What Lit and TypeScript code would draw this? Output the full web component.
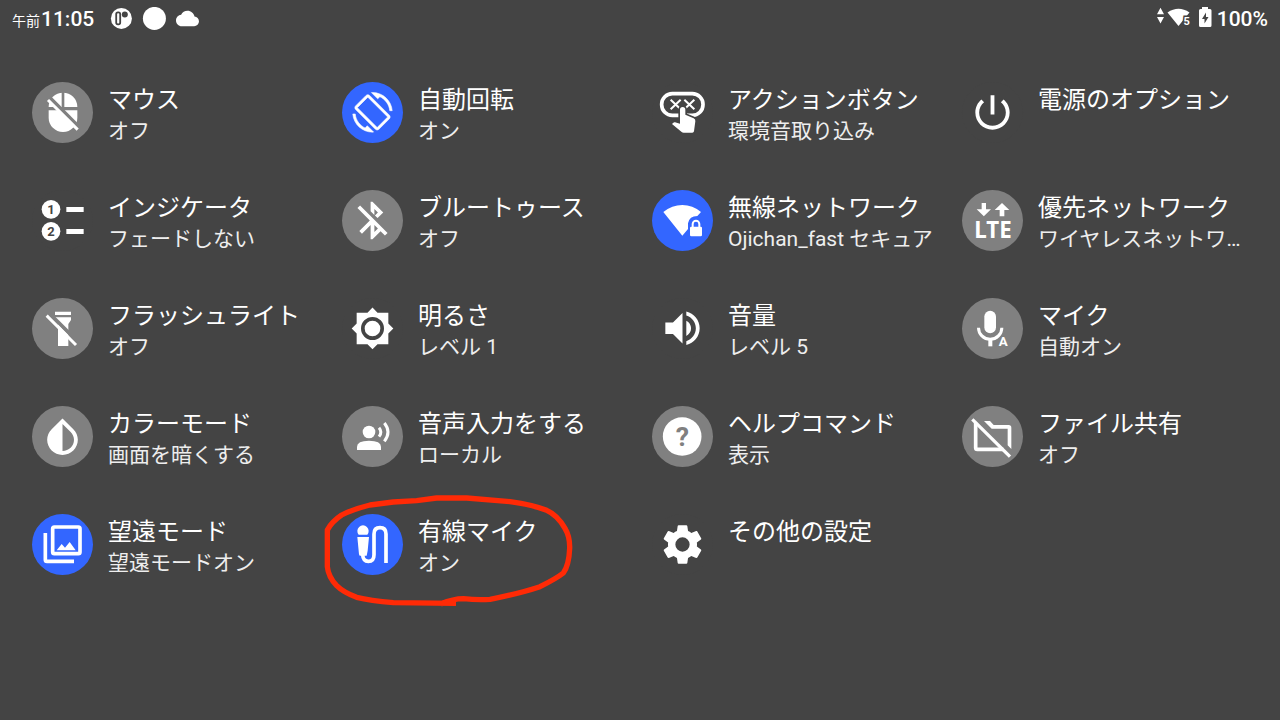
import { LitElement, html, svg, css, nothing } from "lit";
import type { SVGTemplateResult } from "lit";
import { customElement, property } from "lit/decorators.js";
import { classMap } from "lit/directives/class-map.js";

type Tone = "plain" | "off" | "on";

interface Setting {
  icon: string;
  tone: Tone;
  title: string;
  state?: string;
  marked?: boolean;
}

const SETTINGS: Setting[] = [
  { icon: "mouseOff", tone: "off", title: "マウス", state: "オフ" },
  { icon: "rotate", tone: "on", title: "自動回転", state: "オン" },
  { icon: "action", tone: "plain", title: "アクションボタン", state: "環境音取り込み" },
  { icon: "power", tone: "plain", title: "電源のオプション" },
  { icon: "indicator", tone: "plain", title: "インジケータ", state: "フェードしない" },
  { icon: "bluetoothOff", tone: "off", title: "ブルートゥース", state: "オフ" },
  { icon: "wifiLock", tone: "on", title: "無線ネットワーク", state: "Ojichan_fast セキュア" },
  { icon: "lte", tone: "off", title: "優先ネットワーク", state: "ワイヤレスネットワーク" },
  { icon: "flashOff", tone: "off", title: "フラッシュライト", state: "オフ" },
  { icon: "brightness", tone: "plain", title: "明るさ", state: "レベル 1" },
  { icon: "volume", tone: "plain", title: "音量", state: "レベル 5" },
  { icon: "mic", tone: "off", title: "マイク", state: "自動オン" },
  { icon: "colorMode", tone: "off", title: "カラーモード", state: "画面を暗くする" },
  { icon: "voice", tone: "off", title: "音声入力をする", state: "ローカル" },
  { icon: "help", tone: "off", title: "ヘルプコマンド", state: "表示" },
  { icon: "folderOff", tone: "off", title: "ファイル共有", state: "オフ" },
  { icon: "gallery", tone: "on", title: "望遠モード", state: "望遠モードオン" },
  { icon: "wiredMic", tone: "on", title: "有線マイク", state: "オン", marked: true },
  { icon: "settings", tone: "plain", title: "その他の設定" },
];

/* All glyphs share a 183-unit square, three units per pixel. */
const ICONS: Record<string, SVGTemplateResult> = {
  mouseOff: svg`
    <rect x="50" y="32" width="86" height="118" rx="43" ry="43"/>
    <path class="cut" d="M89 30h8v50h-8z M48 75h90v10h-90z"/>
    <path class="cut-line" stroke-width="11" d="M50 44L144 138"/>
    <path class="line" stroke-width="9" d="M48 54L137 143"/>`,
  rotate: svg`<g transform="translate(91.5 91) scale(4.95) translate(-12 -12)">
    <path class="bold" d="M16.48 2.52c3.27 1.55 5.61 4.72 5.97 8.48h1.5C23.44 4.84 18.29 0 12 0l-.66.03 3.81 3.81 1.33-1.32zm-6.25-.77c-.59-.59-1.54-.59-2.12 0L1.75 8.11c-.59.59-.59 1.54 0 2.12l12.02 12.02c.59.59 1.54.59 2.12 0l6.36-6.36c.59-.59.59-1.54 0-2.12L10.23 1.75zm4.6 19.44L2.81 9.17l6.36-6.36 12.02 12.02-6.36 6.36zm-7.31.29C4.25 19.94 1.91 16.76 1.55 13H.05C.56 19.16 5.71 24 12 24l.66-.03-3.81-3.81-1.33 1.32z"/></g>`,
  action: svg`
    <rect class="line" stroke-width="11" x="29" y="35" width="124" height="65" rx="32"/>
    <path class="line" stroke-width="6" d="M56 53L86 82M86 53L56 82M97 53L127 82M127 53L97 82"/>
    <path class="edge" stroke-width="10" d="M84 83a8 8 0 0 1 16 0V98l25 11q6 3 5 9l-4 30q-1 4-5 4H95q-4 0-6-2L60 126l4-4q2-2 5-1l15 4z"/>
    <path d="M84 83a8 8 0 0 1 16 0V98l25 11q6 3 5 9l-4 30q-1 4-5 4H95q-4 0-6-2L60 126l4-4q2-2 5-1l15 4z"/>`,
  power: svg`<g transform="translate(91.5 91.5) scale(5.72) translate(-12 -12)">
    <path d="M13 3h-2v10h2V3zm4.83 2.17l-1.42 1.42C17.99 7.86 19 9.81 19 12c0 3.87-3.13 7-7 7s-7-3.13-7-7c0-2.19 1.01-4.14 2.58-5.42L6.17 5.17C4.23 6.82 3 9.26 3 12c0 4.97 4.03 9 9 9s9-4.03 9-9c0-2.74-1.23-5.18-3.17-6.83z"/></g>`,
  indicator: svg`
    <circle cx="57" cy="58" r="28"/><circle cx="57" cy="124" r="28"/>
    <path d="M103 51h52v15h-52z M103 117h52v15h-52z"/>
    <text class="digit" x="57" y="72">1</text><text class="digit" x="57" y="138">2</text>`,
  bluetoothOff: svg`<g transform="translate(91.5 91.5) scale(5.65) translate(-12 -12)">
    <path d="M13 5.83l1.88 1.88-1.6 1.6 1.41 1.41 3.02-3.02L12 2h-1v5.03l2 2v-3.2zM5.41 4L4 5.41 10.59 12 5 17.59 6.41 19 11 14.41V22h1l4.29-4.29 2.3 2.29L20 18.59 5.41 4zM13 18.17v-3.76l1.88 1.88L13 18.17z"/></g>`,
  wifiLock: svg`
    <path d="M34 66Q60 45 91 45T147 66L136 78Q112 78 108 100V117L91 137z"/>
    <rect x="114" y="110" width="36" height="29" rx="4"/>
    <path class="line" stroke-width="6" d="M122 112V102a10 10 0 0 1 20 0V112"/>`,
  lte: svg`
    <path d="M59 39h13v19h15L65.5 79 44 58h15z M113 79h14V60h15L120 39 98 60h15z"/>
    <text class="lte" x="93" y="145">LTE</text>`,
  flashOff: svg`
    <path d="M69 41h48v10h-48z M69 58h48v8l-8 12v66H78V78l-9-12z"/>
    <path class="cut-line" stroke-width="11" d="M48 42L140 134"/>
    <path class="line" stroke-width="9" d="M44 53L132 141"/>`,
  brightness: svg`
    <path d="M44 44H76.5L91.5 28.5 106.5 44H139V76.5L154 91.5 139 106.5V139H106.5L91.5 154 76.5 139H44V106.5L29 91.5 44 76.5z"/>
    <circle class="cut-line" stroke-width="11" cx="91.5" cy="91.5" r="29"/>`,
  volume: svg`<g transform="translate(91.5 91) scale(5.72) translate(-12 -12)">
    <path d="M3 9v6h4l5 5V4L7 9H3zm13.5 3c0-1.77-1.02-3.29-2.5-4.03v8.05c1.48-.73 2.5-2.25 2.5-4.02zM14 3.23v2.06c2.89.86 5 3.54 5 6.71s-2.11 5.85-5 6.71v2.06c4.01-.91 7-4.49 7-8.77s-2.99-7.86-7-8.77z"/></g>`,
  mic: svg`
    <rect x="67" y="38" width="35" height="68" rx="17.5"/>
    <path class="line" stroke-width="9" d="M49.5 89a35 35 0 0 0 70 0"/>
    <path d="M79 122h12v23h-12z"/>
    <text class="letter" x="124" y="145">A</text>`,
  colorMode: svg`<g transform="translate(91.5 95) scale(5.75) translate(-12 -12)">
    <path fill-rule="evenodd" d="M12 2L6.35 7.56C4.9 8.99 4 10.96 4 13.13 4 17.48 7.58 21 12 21s8-3.52 8-7.87c0-2.17-.9-4.14-2.35-5.57L12 2zM12 4.81V19c3.31 0 6-2.63 6-5.87 0-1.56-.62-3.03-1.75-4.14z"/></g>`,
  voice: svg`
    <circle cx="81" cy="78" r="19"/>
    <path d="M45 132V122q0-18 36-18t36 18V132z"/>
    <path class="line" stroke-width="9" d="M127 51Q149 78 127 106"/>
    <path class="line" stroke-width="9" d="M111 65Q122 78 111 92"/>`,
  help: svg`<circle cx="90.5" cy="91.5" r="58"/><text class="question" x="91" y="120">?</text>`,
  folderOff: svg`
    <path d="M66 45H84L95 57H140a8 8 0 0 1 8 8V129L137 118V68H89z"/>
    <path class="line" stroke-width="11" d="M41 50V125q0 5 5 5H124"/>
    <path class="line" stroke-width="10" d="M31 40L144 152"/>`,
  gallery: svg`
    <rect class="line" stroke-width="11" x="62" y="39" width="82" height="80" rx="5"/>
    <path class="line" stroke-width="11" d="M40 57V137q0 5 5 5H126"/>
    <path d="M74 109L89 90 99 101 113 84 131 109z"/>`,
  wiredMic: svg`
    <path d="M50 62a17 17 0 1 1 26 0z M46 69H81L77 110 74 125H53L51 121z"/>
    <path class="line" stroke-width="11" d="M62 122Q63 142 79 142 96 142 96 122V60Q96 41 114 41 132 41 132 60V147"/>`,
  settings: svg`<g transform="translate(91.5 91.5) scale(5.8) translate(-12 -12)">
    <path d="M19.43 12.98c.04-.32.07-.64.07-.98s-.03-.66-.07-.98l2.11-1.65c.19-.15.24-.42.12-.64l-2-3.46c-.12-.22-.39-.3-.61-.22l-2.49 1c-.52-.4-1.08-.73-1.69-.98l-.38-2.65C14.46 2.18 14.25 2 14 2h-4c-.25 0-.46.18-.49.42l-.38 2.65c-.61.25-1.17.59-1.69.98l-2.49-1c-.23-.09-.49 0-.61.22l-2 3.46c-.13.22-.07.49.12.64l2.11 1.65c-.04.32-.07.65-.07.98s.03.66.07.98l-2.11 1.65c-.19.15-.24.42-.12.64l2 3.46c.12.22.39.3.61.22l2.49-1c.52.4 1.08.73 1.69.98l.38 2.65c.03.24.24.42.49.42h4c.25 0 .46-.18.49-.42l.38-2.65c.61-.25 1.17-.59 1.69-.98l2.49 1c.23.09.49 0 .61-.22l2-3.46c.12-.22.07-.49-.12-.64l-2.11-1.65zM12 15.7a3.7 3.7 0 1 1 0-7.4 3.7 3.7 0 0 1 0 7.4z"/></g>`,
};

@customElement("setting-tile")
export class SettingTile extends LitElement {
  @property({ attribute: false }) item!: Setting;

  static styles = css`
    :host {
      display: block;
      position: relative;
      min-width: 0;
    }
    .tile {
      display: flex;
      align-items: flex-start;
      gap: 15px;
      width: 100%;
      padding: 0 10px 0 12px;
      border: 0;
      background: none;
      color: #fff;
      font: inherit;
      text-align: left;
      cursor: pointer;
    }
    .icon {
      --surface: #444;
      flex: none;
      width: 61px;
      height: 61px;
      border-radius: 50%;
      background: var(--surface);
    }
    .icon.off {
      --surface: #808080;
    }
    .icon.on {
      --surface: #36f;
    }
    .icon svg {
      display: block;
      width: 100%;
      height: 100%;
      fill: #fff;
    }
    .line {
      fill: none;
      stroke: #fff;
    }
    .bold {
      stroke: #fff;
      stroke-width: 0.35;
    }
    .cut {
      fill: var(--surface);
    }
    .cut-line {
      fill: none;
      stroke: var(--surface);
    }
    .edge {
      fill: var(--surface);
      stroke: var(--surface);
    }
    text {
      text-anchor: middle;
      font-family: Roboto, sans-serif;
      font-weight: 700;
    }
    .digit {
      font-size: 39px;
      fill: var(--surface);
    }
    .letter {
      font-size: 40px;
    }
    .lte {
      font-family: "Noto Sans", sans-serif;
      font-size: 67px;
    }
    .question {
      font-size: 80px;
      fill: var(--surface);
    }
    .label {
      display: flex;
      flex-direction: column;
      min-width: 0;
      padding-top: 2px;
    }
    .title,
    .state {
      overflow: hidden;
      white-space: nowrap;
      text-overflow: ellipsis;
    }
    .title {
      font-size: 24px;
      line-height: 32px;
    }
    .state {
      color: #eee;
      font-size: 21px;
      line-height: 30px;
    }
    .marker {
      position: absolute;
      left: -10px;
      top: -22px;
      width: 260px;
      height: 120px;
      fill: none;
      stroke: #ff2a06;
      stroke-width: 16;
      stroke-linejoin: round;
      pointer-events: none;
    }
  `;

  render() {
    const { icon, tone, title, state, marked } = this.item;
    return html`
      <button class="tile" type="button">
        <span class=${classMap({ icon: true, [tone]: true })}>
          <svg viewBox="0 0 183 183" aria-hidden="true">${ICONS[icon]}</svg>
        </span>
        <span class="label">
          <span class="title">${title}</span>
          ${state ? html`<span class="state">${state}</span>` : nothing}
        </span>
      </button>
      ${marked
        ? html`<svg class="marker" viewBox="0 621 780 360" aria-hidden="true">
            <path
              d="M408 955L220 953Q150 947 110 937 70 922 50 902 25 875 22 845L22 735Q35 710 65 690 100 672 150 660L220 651 290 647 350 639 440 639 570 650Q640 660 680 676 712 690 735 730 750 755 749 790 747 840 730 864 710 880 660 905 600 925 510 943 470 945 430 941 400 941 362 957"
            />
          </svg>`
        : nothing}
    `;
  }
}

@customElement("app-root")
export class AppRoot extends LitElement {
  static styles = css`
    :host {
      display: block;
      min-height: 100vh;
      background: #444;
      color: #fff;
      font-family: Roboto, "Noto Sans CJK JP", sans-serif;
    }
    .status {
      display: flex;
      align-items: center;
      justify-content: space-between;
      height: 38px;
      padding: 0 12px;
      font-size: 21px;
      font-weight: 500;
      line-height: 36px;
    }
    .group {
      display: flex;
      align-items: center;
    }
    .time {
      display: flex;
      align-items: baseline;
      gap: 1px;
      margin-right: 16px;
      padding-top: 2px;
    }
    .ampm {
      font-size: 14px;
      font-weight: 400;
    }
    .status svg {
      display: block;
      fill: #fff;
    }
    .apps {
      width: 90px;
      height: 24px;
    }
    .radios {
      width: 56px;
      height: 24px;
      margin-right: 5px;
    }
    .hole {
      fill: none;
      stroke: #444;
    }
    .dark {
      fill: #444;
    }
    .band {
      font: 700 11px Roboto, sans-serif;
      stroke: #444;
      stroke-width: 3px;
      paint-order: stroke;
    }
    .grid {
      display: grid;
      grid-template-columns: repeat(4, minmax(0, 1fr));
      grid-auto-rows: minmax(64px, auto);
      row-gap: 44px;
      margin: 0;
      padding: 44px 20px 24px;
    }
  `;

  render() {
    return html`
      <header class="status">
        <div class="group">
          <span class="time"><span class="ampm">午前</span>11:05</span>
          <svg class="apps" viewBox="0 0 90 24" aria-hidden="true">
            <circle cx="11.4" cy="11.4" r="10.5" />
            <rect class="hole" stroke-width="1.8" x="6.2" y="5.3" width="4" height="12" rx="1.8" />
            <circle class="dark" cx="14.8" cy="7.4" r="3" />
            <circle cx="44.4" cy="11.4" r="11.5" />
            <path
              transform="translate(66 0) scale(0.957)"
              d="M19.35 10.04C18.67 6.59 15.64 4 12 4 9.11 4 6.6 5.64 5.35 8.04 2.34 8.36 0 10.91 0 14c0 3.31 2.69 6 6 6h13c2.76 0 5-2.24 5-5 0-2.64-2.05-4.78-4.65-4.96z"
            />
          </svg>
        </div>
        <div class="group">
          <svg class="radios" viewBox="0 0 56 24" aria-hidden="true">
            <path d="M4.5 0.700L8 7.200H1zM4.500 16.500L8 10H1z" />
            <path d="M11.500 5.500Q22.500-2 33.500 5.500L22.500 19z" />
            <text class="band" x="27.500" y="17.500">5</text>
            <path d="M46 0h6v2h2a1.500 1.500 0 0 1 1.500 1.500V18.500A1.500 1.500 0 0 1 54 20H44.500A1.500 1.500 0 0 1 43 18.500V3.500A1.500 1.500 0 0 1 44.500 2H46z" />
            <path class="dark" d="M50 5.500L46 12h2.500v4.500L52.500 10H50z" />
          </svg>
          <span>100%</span>
        </div>
      </header>
      <main class="grid">
        ${SETTINGS.map((item) => html`<setting-tile .item=${item}></setting-tile>`)}
      </main>
    `;
  }
}
